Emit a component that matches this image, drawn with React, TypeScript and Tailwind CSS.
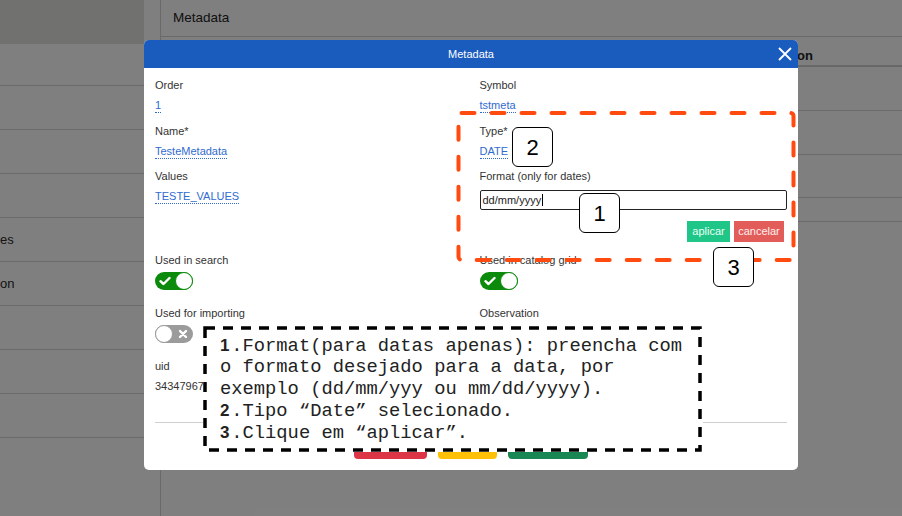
import React from "react";

const labelCls = "text-[11px] leading-[14px] text-[#333]";
const linkCls =
  "text-[11px] leading-[14px] text-[#2f6bcf] border-b border-dotted border-[#2f6bcf]";

function Field({ title, value }: { title: string; value: string }) {
  return (
    <div className="flex flex-col items-start">
      <span className={labelCls}>{title}</span>
      <span className={`mt-[6px] ${linkCls}`}>{value}</span>
    </div>
  );
}

function Toggle({ on }: { on: boolean }) {
  if (on) {
    return (
      <div className="mt-[5px] flex h-[18px] w-[38px] items-center justify-between rounded-full bg-[#0c8a0c]">
        <svg width="12" height="10" viewBox="0 0 12 10" className="ml-[4px]">
          <path d="M1.5 5.2 L4.5 8 L10.5 2" fill="none" stroke="white" strokeWidth="2.4" strokeLinecap="round" strokeLinejoin="round" />
        </svg>
        <span className="h-[18px] w-[18px] rounded-full border border-[#0c8a0c] bg-white" />
      </div>
    );
  }
  return (
    <div className="mt-[5px] flex h-[18px] w-[38px] items-center justify-between rounded-full bg-[#9b9b9b]">
      <span className="h-[18px] w-[18px] rounded-full border border-[#9b9b9b] bg-white" />
      <svg width="10" height="10" viewBox="0 0 10 10" className="mr-[5px]">
        <path d="M2 2 L8 8 M8 2 L2 8" stroke="white" strokeWidth="2.4" strokeLinecap="round" />
      </svg>
    </div>
  );
}

function Callout({ n, className }: { n: string; className: string }) {
  return (
    <div
      className={`absolute flex h-[40px] w-[41px] items-center justify-center rounded-[6px] border border-black bg-white text-[22px] text-black ${className}`}
    >
      {n}
    </div>
  );
}

export default function App() {
  return (
    <div className="relative h-[516px] w-[902px] overflow-hidden bg-white font-['Liberation_Sans',Arial,sans-serif]">
      {/* page behind the modal */}
      <div className="flex h-full">
        <div className="w-[144px] shrink-0">
          <div className="h-[44px] bg-[#e2e2e0]" />
          <div className="h-[42px] border-b border-[#d4d4d4]" />
          {[0, 1, 2].map((i) => (
            <div key={i} className="h-[44px] border-b border-[#d4d4d4]" />
          ))}
          <div className="flex h-[44px] items-center border-b border-[#d4d4d4] text-[13px] text-[#2a2a2a]">
            es
          </div>
          <div className="flex h-[44px] items-center border-b border-[#d4d4d4] text-[13px] text-[#2a2a2a]">
            on
          </div>
          {[0, 1, 2].map((i) => (
            <div key={i} className="h-[44px] border-b border-[#d4d4d4]" />
          ))}
        </div>
        <div className="ml-[16px] flex-1 border-l border-[#d4d4d4]">
          <div className="flex h-[37px] items-center border-b border-[#d4d4d4] px-[12px] text-[13.5px] text-[#222]">
            Metadata
          </div>
          <div className="flex h-[30px] items-center border-b-2 border-[#d0d0d0] pl-[576px] pt-[10px] text-[13px] font-bold text-[#222]">
            Observation
          </div>
          <div className="h-[44px] border-b border-[#d4d4d4]" />
          <div className="h-[44px] border-b border-[#d4d4d4]" />
          <div className="h-[43px] border-b border-[#d4d4d4]" />
          <div className="h-[24px] border-b border-[#d4d4d4]" />
        </div>
      </div>

      {/* overlay + modal */}
      <div className="absolute inset-0 bg-black/50" />
      <div className="absolute left-[144px] top-[40px] flex h-[430px] w-[654px] flex-col overflow-hidden rounded-[5px] bg-white">
        <div className="relative flex h-[28px] shrink-0 items-center justify-center bg-[#1a5bbe] text-[11px] text-white">
          Metadata
          <svg width="14" height="14" viewBox="0 0 14 14" className="absolute right-[6px] top-[7px]">
            <path d="M1 1 L13 13 M13 1 L1 13" stroke="white" strokeWidth="1.8" />
          </svg>
        </div>
        <div className="flex flex-1 flex-col px-[11px] pt-[10px]">
          <div className="grid grid-cols-2 gap-x-[17px]">
            <Field title="Order" value="1" />
            <Field title="Symbol" value="tstmeta" />
          </div>
          <div className="mt-[11px] grid grid-cols-2 gap-x-[17px]">
            <Field title="Name*" value="TesteMetadata" />
            <Field title="Type*" value="DATE" />
          </div>
          <div className="mt-[10px] grid grid-cols-2 gap-x-[17px]">
            <Field title="Values" value="TESTE_VALUES" />
            <div className="flex flex-col">
              <span className={labelCls}>Format (only for dates)</span>
              <div className="mt-[7px] flex h-[20px] items-center rounded-[2px] border-[1.5px] border-[#222] px-[2px] text-[11px] text-[#222]">
                dd/mm/yyyy
                <span className="ml-[1px] h-[12px] w-px bg-black" />
              </div>
              <div className="mt-[11px] flex justify-end gap-[4px] pr-[3px]">
                <span className="flex h-[21px] w-[43px] items-center justify-center bg-[#1fc687] text-[11px] text-[#eafff5]">
                  aplicar
                </span>
                <span className="flex h-[21px] w-[50px] items-center justify-center bg-[#e25c5a] text-[11px] text-[#fff0f0]">
                  cancelar
                </span>
              </div>
            </div>
          </div>
          <div className="mt-[11px] grid grid-cols-2 gap-x-[17px]">
            <div className="flex flex-col items-start">
              <span className={labelCls}>Used in search</span>
              <Toggle on />
            </div>
            <div className="flex flex-col items-start">
              <span className={labelCls}>Used in catalog grid</span>
              <Toggle on />
            </div>
          </div>
          <div className="mt-[16px] grid grid-cols-2 gap-x-[17px]">
            <div className="flex flex-col items-start">
              <span className={labelCls}>Used for importing</span>
              <Toggle on={false} />
            </div>
            <div className="flex flex-col items-start">
              <span className={labelCls}>Observation</span>
            </div>
          </div>
          <div className="mt-[16px] flex flex-col items-start">
            <span className={labelCls}>uid</span>
            <span className={`mt-[6px] ${labelCls}`}>34347967</span>
          </div>
          <div className="mt-[29px] border-t border-[#cfcfcf]" />
          <div className="mt-[8px] flex justify-center gap-[11px]">
            <span className="h-[28px] w-[73px] rounded-[4px] bg-[#dc3545]" />
            <span className="h-[28px] w-[59px] rounded-[4px] bg-[#ffc107]" />
            <span className="h-[28px] w-[80px] rounded-[4px] bg-[#198754]" />
          </div>
        </div>
      </div>

      {/* orange dashed highlight */}
      <svg className="absolute left-[456px] top-[110px]" width="341" height="153">
        <rect x="2.5" y="3" width="335" height="147" rx="3" fill="none" stroke="#ff4a10" strokeWidth="4" strokeDasharray="13 17" strokeLinecap="round" />
      </svg>

      <Callout n="2" className="left-[512px] top-[127px]" />
      <Callout n="1" className="left-[579px] top-[193px]" />
      <Callout n="3" className="left-[713px] top-[247px]" />

      {/* instructions box */}
      <div className="absolute left-[203px] top-[326px] h-[126px] w-[500px] bg-white">
        <svg className="absolute inset-0" width="500" height="126">
          <rect x="2" y="2" width="495" height="122" fill="none" stroke="black" strokeWidth="3.5" strokeDasharray="10 8" />
        </svg>
        <div className="relative pl-[17px] pt-[9px] font-['Liberation_Mono','Courier_New',monospace] text-[18.8px] leading-[21.25px] text-[#222] whitespace-pre">
          <div>
            <b className="inline-block w-[11.28px] font-['Liberation_Sans',sans-serif] text-[17px]">1</b>.Format(para datas apenas): preencha com
          </div>
          <div>o formato desejado para a data, por</div>
          <div>exemplo (dd/mm/yyy ou mm/dd/yyyy).</div>
          <div>
            <b className="inline-block w-[11.28px] font-['Liberation_Sans',sans-serif] text-[17px]">2</b>.Tipo “Date” selecionado.
          </div>
          <div>
            <b className="inline-block w-[11.28px] font-['Liberation_Sans',sans-serif] text-[17px]">3</b>.Clique em “aplicar”.
          </div>
        </div>
      </div>
    </div>
  );
}
